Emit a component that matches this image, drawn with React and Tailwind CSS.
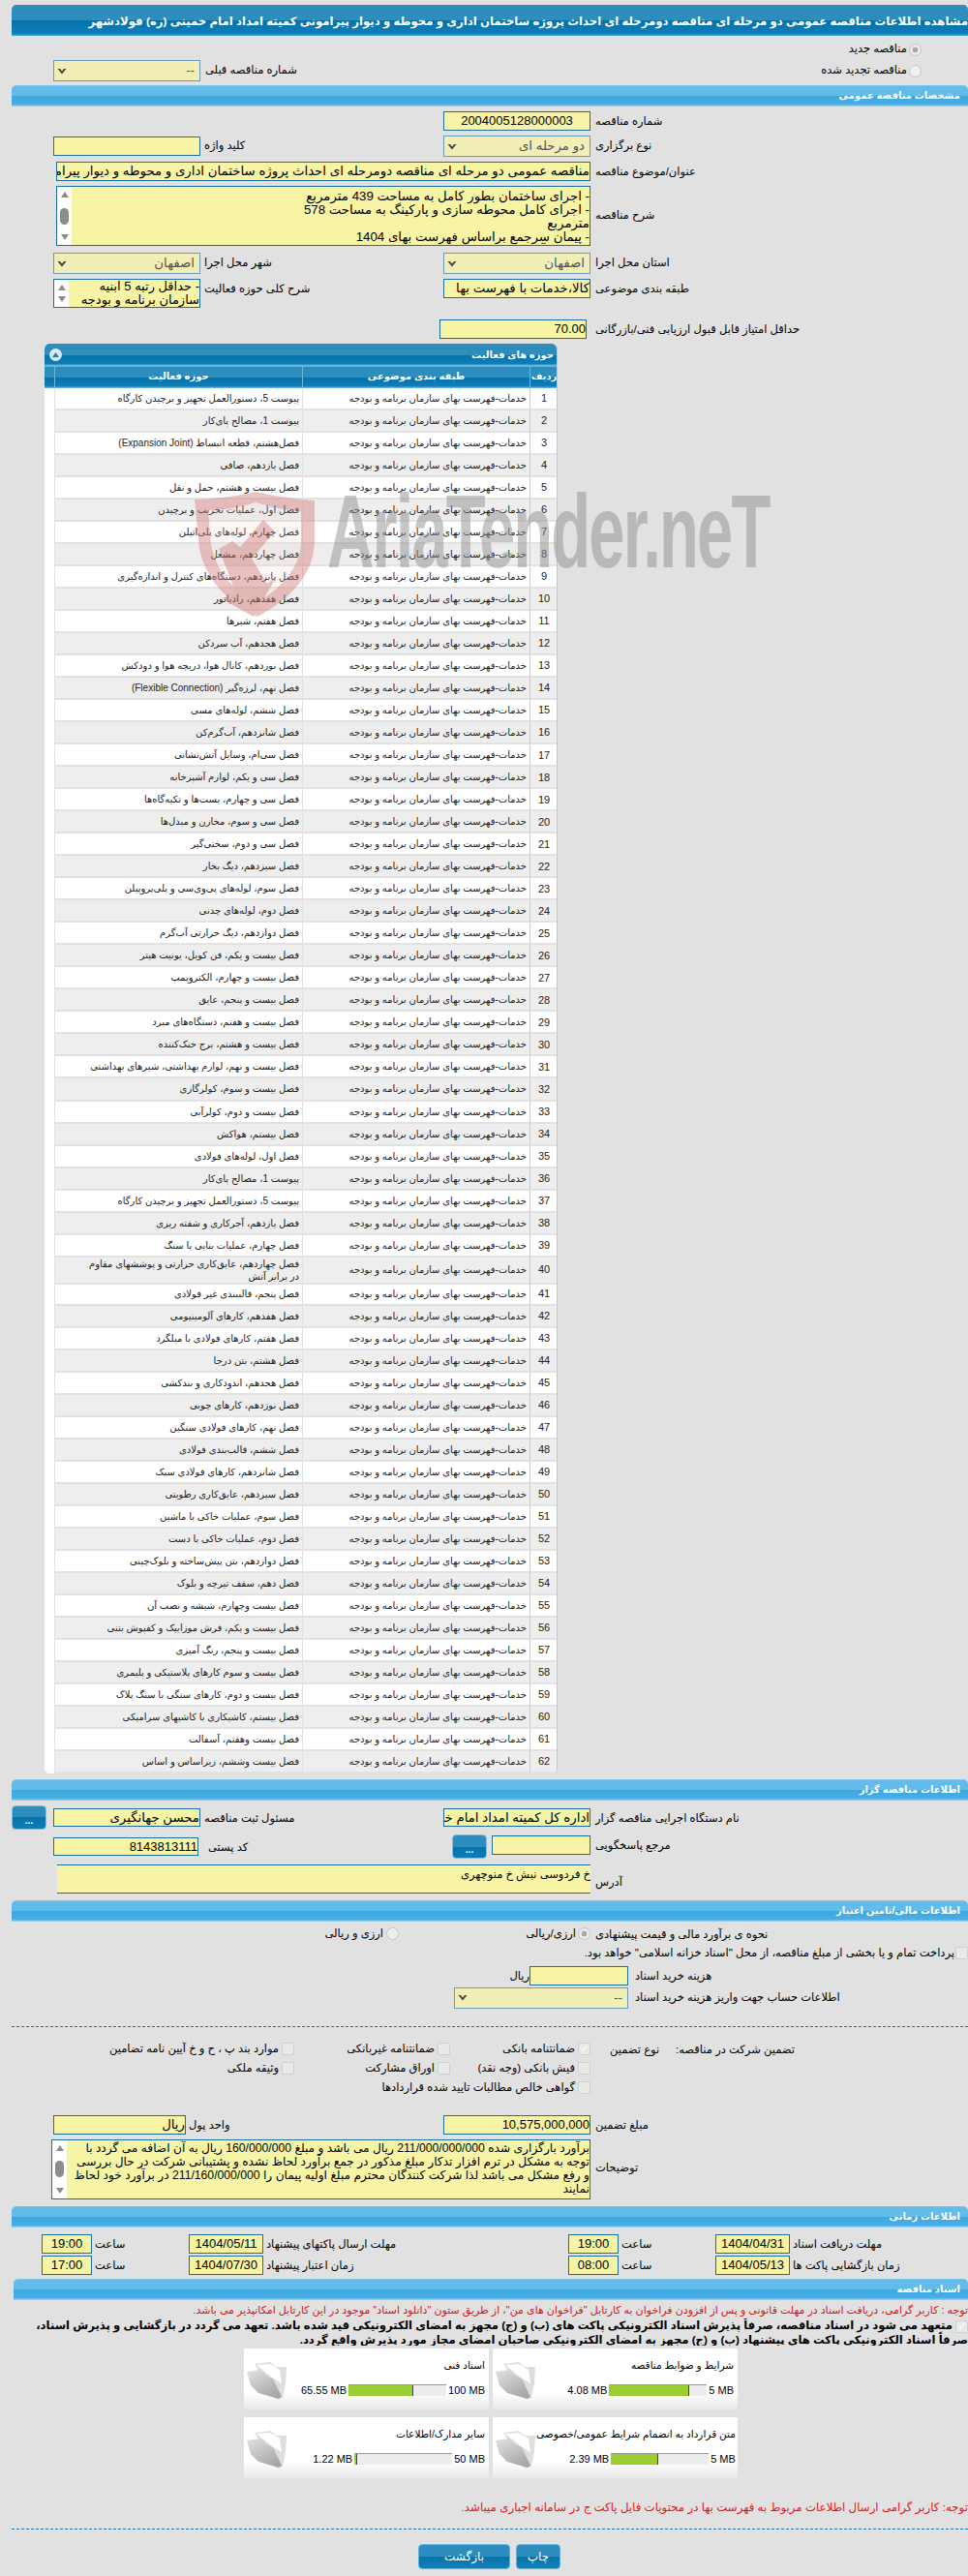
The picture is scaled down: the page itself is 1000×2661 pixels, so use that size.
import React from 'react';

const ACTIVITIES = [
  'پیوست 5، دستورالعمل تجهیز و برچیدن کارگاه',
  'پیوست 1، مصالح پای‌کار',
  'فصل‌هشتم، قطعه انبساط (Expansion Joint)',
  'فصل یازدهم، صافی',
  'فصل بیست و هشتم، حمل و نقل',
  'فصل اول، عملیات تخریب و برچیدن',
  'فصل چهارم، لوله‌های پلی‌اتیلن',
  'فصل چهاردهم، مشعل',
  'فصل پانزدهم، دستگاه‌های کنترل و اندازه‌گیری',
  'فصل هفدهم، رادیاتور',
  'فصل هفتم، شیرها',
  'فصل هجدهم، آب سردکن',
  'فصل نوزدهم، کانال هوا، دریچه هوا و دودکش',
  'فصل نهم، لرزه‌گیر (Flexible Connection)',
  'فصل ششم، لوله‌های مسی',
  'فصل شانزدهم، آب‌گرم‌کن',
  'فصل سی‌ام، وسایل آتش‌نشانی',
  'فصل سی و یکم، لوازم آشپزخانه',
  'فصل سی و چهارم، بست‌ها و تکیه‌گاه‌ها',
  'فصل سی و سوم، مخازن و مبدل‌ها',
  'فصل سی و دوم، سختی‌گیر',
  'فصل سیزدهم، دیگ بخار',
  'فصل سوم، لوله‌های پی‌وی‌سی و پلی‌پروپیلن',
  'فصل دوم، لوله‌های چدنی',
  'فصل دوازدهم، دیگ حرارتی آب‌گرم',
  'فصل بیست و یکم، فن کویل، یونیت هیتر',
  'فصل بیست و چهارم، الکتروپمپ',
  'فصل بیست و پنجم، عایق',
  'فصل بیست و هفتم، دستگاه‌های مبرد',
  'فصل بیست و هشتم، برج خنک‌کننده',
  'فصل بیست و نهم، لوازم بهداشتی، شیرهای بهداشتی',
  'فصل بیست و سوم، کولرگازی',
  'فصل بیست و دوم، کولرآبی',
  'فصل بیستم، هواکش',
  'فصل اول، لوله‌های فولادی',
  'پیوست 1، مصالح پای‌کار',
  'پیوست 5، دستورالعمل تجهیز و برچیدن کارگاه',
  'فصل یازدهم، آجرکاری و شفته ریزی',
  'فصل چهارم، عملیات بنایی با سنگ',
  'فصل چهاردهم، عایق‌کاری حرارتی و پوششهای مقاوم در برابر آتش',
  'فصل پنجم، قالببندی غیر فولادی',
  'فصل هفدهم، کارهای آلومینیومی',
  'فصل هفتم، کارهای فولادی با میلگرد',
  'فصل هشتم، بتن درجا',
  'فصل هجدهم، اندودکاری و بندکشی',
  'فصل نوزدهم، کارهای چوبی',
  'فصل نهم، کارهای فولادی سنگین',
  'فصل ششم، قالب‌بندی فولادی',
  'فصل شانزدهم، کارهای فولادی سبک',
  'فصل سیزدهم، عایق‌کاری رطوبتی',
  'فصل سوم، عملیات خاکی با ماشین',
  'فصل دوم، عملیات خاکی با دست',
  'فصل دوازدهم، بتن پیش‌ساخته و بلوک‌چینی',
  'فصل دهم، سقف تیرچه و بلوک',
  'فصل بیست وچهارم، شیشه و نصب آن',
  'فصل بیست و یکم، فرش موزاییک و کفپوش بتنی',
  'فصل بیست و پنجم، رنگ آمیزی',
  'فصل بیست و سوم کارهای پلاستیکی و پلیمری',
  'فصل بیست و دوم، کارهای سنگی با سنگ پلاک',
  'فصل بیستم، کاشیکاری با کاشیهای سرامیکی',
  'فصل بیست وهفتم، آسفالت',
  'فصل بیست وششم، زیراساس و اساس',
];

const CATEGORY = 'خدمات-فهرست بهای سازمان برنامه و بودجه';

function SectionBar({ title, className = 'ml-[12px]' }) {
  return (
    <div dir="rtl" className={`h-[22px] rounded-t-[5px] bg-[linear-gradient(#7cc8ee_0%,#62bbe9_8%,#62bbe9_50%,#3ba7e1_50%,#4aaee4_90%,#a4d6f0_100%)] pr-2 text-[10px] font-bold leading-[22px] text-white ${className}`}>
      {title}
    </div>
  );
}

function Field({ className = '', wrap, children }) {
  return (
    <div dir="rtl" className={`overflow-hidden border border-[#1d6fa0] bg-[#f7f5a5] text-black ${wrap ? 'whitespace-normal' : 'whitespace-nowrap'} ${className || 'text-[13.3px] leading-[18px]'}`}>
      {children}
    </div>
  );
}

function Select({ value, className = '' }) {
  return (
    <div dir="ltr" className={`flex items-center justify-between border border-[#6d9ab5] bg-[#f1efb6] pl-[3px] pr-[5px] text-[13.3px] text-[#555] ${className}`}>
      <svg width="10" height="7" viewBox="0 0 10 7"><path d="M0.5 1 L3 1 L5 3.5 L7 1 L9.5 1 L5 6.5 Z" fill="#444" /></svg>
      <span dir="rtl">{value}</span>
    </div>
  );
}

function Radio({ checked }) {
  return (
    <span className={`inline-block h-[13px] w-[13px] shrink-0 rounded-full border border-[#c4c4c4] ${checked ? 'bg-[radial-gradient(#a8a8a8_35%,#ececec_40%)]' : 'bg-[#efefef]'}`} />
  );
}

function Check({ checked }) {
  return (
    <span className="inline-flex h-[13px] w-[13px] shrink-0 items-center justify-center rounded-[2px] border border-[#cfcfcf] bg-[#e9e9e9] text-[11px] leading-none text-white">
      {checked ? '✓' : ''}
    </span>
  );
}

function Scrollbar({ thumb = true }) {
  return (
    <div className="absolute left-0 top-0 flex h-full w-[15px] flex-col items-center justify-between bg-white py-[5px]">
      <span className="h-0 w-0 border-x-[4px] border-b-[6px] border-x-transparent border-b-[#8c8c8c]" />
      {thumb && <span className="h-[17px] w-[9px] rounded-full bg-[#8c8c8c]" />}
      <span className="h-0 w-0 border-x-[4px] border-t-[6px] border-x-transparent border-t-[#8c8c8c]" />
    </div>
  );
}

function SmallBtn({ className = '' }) {
  return (
    <div className={`flex h-[25px] w-[36px] shrink-0 items-end justify-center rounded-[4px] border border-[#7cc0e6] bg-[linear-gradient(#2d8dbd_50%,#0472ab_50%,#0f7eb6_100%)] pb-[2px] text-[10px] font-bold leading-[12px] text-white ${className}`}>
      ...
    </div>
  );
}

function BlueBtn({ children, className = '' }) {
  return (
    <div className={`flex h-[26px] items-center justify-center rounded-[4px] border border-[#5fb4e2] bg-[linear-gradient(#2d8dbd_50%,#0472ab_50%,#1580b8_100%)] text-[12px] text-white ${className}`}>
      {children}
    </div>
  );
}

// the big form rows: [spacer][left input][left label][right input][right label]
function FormRow({ className = '', children }) {
  return (
    <div dir="ltr" className={`grid grid-cols-[55px_152px_251px_152px_1fr] ${className}`}>
      {children}
    </div>
  );
}

function Label({ children, className = 'pl-[5px]' }) {
  return <div className={`whitespace-nowrap text-[11.5px] leading-[20px] ${className}`} dir="ltr"><span dir="rtl">{children}</span></div>;
}

function FolderIcon() {
  return (
    <svg width="42" height="40" viewBox="0 0 42 40" className="mt-[14px] shrink-0">
      <defs>
        <linearGradient id="folderFront" x1="0" y1="0" x2="0.7" y2="1">
          <stop offset="0" stopColor="#e2e2e2" />
          <stop offset="1" stopColor="#a6a6a6" />
        </linearGradient>
      </defs>
      <path d="M8 2 L24 0 L30 5 L41 5 L40 22 L37 37 L30 38 Z" fill="#dedede" />
      <path d="M10 3 L24 2 L34 8 L36 22 L26 16 Z" fill="#ffffff" />
      <path d="M0 10 L14 8 L20 14 L27 17 L36 36 L33 38 L12 32 L4 24 Z" fill="url(#folderFront)" />
    </svg>
  );
}

function DocCard({ title, used, max, pct }) {
  return (
    <div dir="ltr" className="flex h-[63px] w-[253px] bg-[linear-gradient(#ffffff_72%,#e8e8e8_100%)] pl-[3px] pr-[4px]">
      <FolderIcon />
      <div className="flex flex-1 flex-col pt-[8px]">
        <div dir="rtl" className="h-[29px] whitespace-nowrap text-[10.5px] leading-[18px]">{title}</div>
        <div className="flex items-center justify-end gap-[2px] text-[11px] leading-[12px]">
          <span className="shrink-0">{used}</span>
          <div className="flex h-[12px] w-[101px] shrink-0 border-t border-[#999] bg-[#ededed]">
            <div className="border-r border-[#444] bg-[#9acd32]" style={{ width: `${pct}%` }} />
          </div>
          <span className="shrink-0">{max}</span>
        </div>
      </div>
    </div>
  );
}

function Watermark() {
  return (
    <div dir="ltr" className="pointer-events-none absolute left-[200px] top-[507px] h-[131px] w-[620px]">
      <svg width="126" height="131" viewBox="0 0 126 131" className="absolute left-0 top-0 opacity-45">
        <path d="M1 9 Q35 8 64 1 Q95 8 125 10 L125 55 Q122 100 66 130 Q15 105 6 60 Z M15 20 Q40 20 64 12 Q88 20 111 21 L111 55 Q108 90 66 115 Q25 95 18 55 Z" fill="#d47f7c" fillRule="evenodd" />
        <path d="M15 20 Q40 20 64 12 Q88 20 111 21 L111 55 Q108 90 66 115 Q25 95 18 55 Z" fill="#efcfce" opacity="0.4" />
        <path d="M72 30 L84 42 L60 70 L76 96 L86 88 L62 130 L30 112 L44 106 L26 60 L40 52 L48 58 Z" fill="#cf7672" />
      </svg>
      <span className="absolute left-[138px] top-[-12px] origin-left scale-x-[0.62] whitespace-nowrap font-['Liberation_Sans'] text-[108px] font-bold leading-[108px] tracking-[-3px] text-[#8f8f8f]/50">AriaTender.neT</span>
    </div>
  );
}

function ActivityTable() {
  return (
    <div dir="ltr" className="ml-[46px] mt-[5px] w-[530px] overflow-hidden rounded-[5px] border-r border-[#a9cfe8] bg-white">
      <div className="flex h-[23px] items-center justify-between rounded-t-[5px] bg-[linear-gradient(#2d8dbd_50%,#0472ab_50%,#0f7eb6_90%,#7cc0e6_100%)] pl-[5px] pr-[3px] text-[10px] font-bold text-white">
        <span className="flex h-[13px] w-[13px] items-center justify-center rounded-full bg-[#dbe9f3]">
          <svg width="7" height="5" viewBox="0 0 7 5"><path d="M3.5 0 L7 5 L0 5 Z" fill="#1c7fb4" /></svg>
        </span>
        <span dir="rtl">حوزه های فعالیت</span>
      </div>
      <div className="grid h-[23px] grid-cols-[10px_256px_235px_29px] border-t border-[#5fb4e2] bg-[linear-gradient(#2d8dbd_50%,#0472ab_50%,#0f7eb6_90%,#7cc0e6_100%)] text-center text-[10px] font-bold leading-[20px] text-white">
        <div />
        <div dir="rtl" className="border-l border-[#6db5da]">حوزه فعالیت</div>
        <div dir="rtl" className="border-l border-[#6db5da]">طبقه بندی موضوعی</div>
        <div dir="rtl" className="border-l border-[#6db5da]">ردیف</div>
      </div>
      {ACTIVITIES.map((name, i) => (
        <div key={i} className={`grid grid-cols-[10px_256px_235px_29px] ${i === 39 ? 'h-[27px]' : 'h-[23.03px]'} text-[10px] text-[#222]`}>
          <div />
          <div dir="rtl" className={`flex items-center border-b-2 border-l border-[#e2e2e2] pr-[3px] leading-[13px] ${i === 39 ? 'pl-[28px]' : ''} ${i % 2 ? 'bg-[#eeeeee]' : ''}`}>{name}</div>
          <div dir="rtl" className={`flex items-center whitespace-nowrap border-b-2 border-l border-[#e2e2e2] pr-[3px] ${i % 2 ? 'bg-[#eeeeee]' : ''}`}>{CATEGORY}</div>
          <div className={`flex items-center justify-center border-b-2 border-l border-[#c9c9c9] border-b-[#e2e2e2] text-[11px] ${i % 2 ? 'bg-[#eeeeee]' : ''}`}>{i + 1}</div>
        </div>
      ))}
    </div>
  );
}

function CheckItem({ checked, children }) {
  return (
    <div dir="rtl" className="flex items-center gap-[3px] whitespace-nowrap text-[11.5px]">
      <Check checked={checked} /><span>{children}</span>
    </div>
  );
}

function DateRow({ label, date, label2, date2, time, time2 }) {
  const box = 'text-center text-[13px] leading-[18px]';
  return (
    <div dir="ltr" className="grid h-[20px] grid-cols-[43px_52px_100px_77px_315px_52px_100px_77px_1fr]">
      <div />
      <Field className={box}>{time2}</Field>
      <Label className="pl-[3px]">ساعت</Label>
      <Field className={box}>{date2}</Field>
      <Label className="pl-[3px]">{label2}</Label>
      <Field className={box}>{time}</Field>
      <Label className="pl-[3px]">ساعت</Label>
      <Field className={box}>{date}</Field>
      <Label className="pl-[3px]">{label}</Label>
    </div>
  );
}

export default function App() {
  return (
    <div className="relative h-[2661px] w-[1000px] overflow-hidden bg-[#e1e1e1] pt-[5px] font-['Liberation_Sans','DejaVu_Sans',sans-serif] text-[12px] text-black">
      {/* page title */}
      <div dir="rtl" className="ml-[12px] h-[32px] overflow-hidden whitespace-nowrap rounded-t-[5px] bg-[linear-gradient(#2d8dbd_50%,#0472ab_50%,#0f7eb6_92%,#4ca6dc_100%)] text-[11.7px] font-bold leading-[34px] text-white">
        مشاهده اطلاعات مناقصه عمومی دو مرحله ای مناقصه دومرحله ای احداث پروژه ساختمان اداری و محوطه و دیوار پیرامونی کمیته امداد امام خمینی (ره) فولادشهر
      </div>

      {/* new / renewed tender */}
      <div dir="rtl" className="h-[51px] pt-[3px]">
        <div className="flex h-[22px] items-center gap-[2px] pr-[48px] text-[11.5px]">
          <Radio checked /><span>مناقصه جدید</span>
        </div>
        <div dir="ltr" className="grid h-[22px] grid-cols-[55px_152px_1fr_auto] pr-[48px]">
          <div />
          <Select value="--" className="h-[22px]" />
          <Label>شماره مناقصه قبلی</Label>
          <div dir="rtl" className="flex items-center gap-[2px] text-[11.5px]">
            <Radio /><span>مناقصه تجدید شده</span>
          </div>
        </div>
      </div>

      <SectionBar title="مشخصات مناقصه عمومی" />

      <FormRow className="mt-[5px] h-[20px]">
        <div /><div /><div />
        <Field className="text-center text-[13px] leading-[18px]">2004005128000003</Field>
        <Label>شماره مناقصه</Label>
      </FormRow>
      <FormRow className="mt-[5px] h-[22px]">
        <div />
        <Field className="mt-[1px] h-[20px]" />
        <Label className="pl-[4px]">کلید واژه</Label>
        <Select value="دو مرحله ای" />
        <Label>نوع برگزاری</Label>
      </FormRow>
      <FormRow className="mt-[5px] h-[20px]">
        <div />
        <Field className="col-span-3 ml-[3px] text-[13.3px] leading-[18px]">مناقصه عمومی دو مرحله ای مناقصه دومرحله ای احداث پروژه ساختمان اداری و محوطه و دیوار پیرامونی کمیته امداد امام خمینی (ره) فولادشهر</Field>
        <Label>عنوان/موضوع مناقصه</Label>
      </FormRow>
      <FormRow className="mt-[5px] h-[62px]">
        <div />
        <Field wrap className="relative col-span-3 ml-[3px] pl-[16px] text-[13.3px] leading-[14px]">
          <Scrollbar />
          <div className="pt-[3px]">- اجرای ساختمان بطور کامل به مساحت 439 مترمربع</div>
          <div>- اجرای کامل محوطه سازی و پارکینگ به مساحت 578</div>
          <div>مترمربع</div>
          <div>- پیمان سرجمع براساس فهرست بهای 1404</div>
          <div>- مبلغ برآورد 211/160/000/000 ریال</div>
        </Field>
        <Label className="pl-[5px] pt-[20px]">شرح مناقصه</Label>
      </FormRow>
      <FormRow className="mt-[7px] h-[22px]">
        <div />
        <Select value="اصفهان" />
        <Label className="pl-[4px]">شهر محل اجرا</Label>
        <Select value="اصفهان" />
        <Label>استان محل اجرا</Label>
      </FormRow>
      <FormRow className="mt-[5px] h-[30px]">
        <div />
        <Field wrap className="relative pl-[15px] text-[13px] leading-[14px]">
          <Scrollbar thumb={false} />
          - حداقل رتبه 5 ابنیه سازمان برنامه و بودجه
        </Field>
        <Label className="pl-[4px]">شرح کلی حوزه فعالیت</Label>
        <Field className="h-[20px] text-[13.3px] leading-[18px]">کالا،خدمات با فهرست بها</Field>
        <Label>طبقه بندی موضوعی</Label>
      </FormRow>
      <FormRow className="mt-[12px] h-[20px]">
        <div /><div /><div />
        <Field className="-ml-[4px] mr-[4px] w-[152px] text-[13px] leading-[18px]">70.00</Field>
        <Label>حداقل امتیاز قابل قبول ارزیابی فنی/بازرگانی</Label>
      </FormRow>

      <ActivityTable />

      <SectionBar title="اطلاعات مناقصه گزار" className="ml-[12px] mt-[6px]" />

      <FormRow className="mt-[5px] h-[25px]">
        <div><SmallBtn className="ml-[12px]" /></div>
        <Field className="my-[3px] text-[13.3px] leading-[18px]">محسن جهانگیری</Field>
        <Label className="pl-[4px] pt-[3px]">مسئول ثبت مناقصه</Label>
        <Field className="my-[3px] text-[13.3px] leading-[18px]">اداره کل کمیته امداد امام خمینی (ره) استان اصفهان</Field>
        <Label className="pl-[5px] pt-[3px]">نام دستگاه اجرایی مناقصه گزار</Label>
      </FormRow>
      <FormRow className="mt-[5px] h-[25px]">
        <div />
        <Field className="my-[3px] w-[150px] text-[13px] leading-[18px]">8143813111</Field>
        <Label className="pl-[8px] pt-[3px]">کد پستی</Label>
        <div className="flex items-start justify-between pl-[9px]">
          <SmallBtn />
          <Field className="mt-[1px] h-[20px] w-[102px]" />
        </div>
        <Label className="pl-[5px] pt-[1px]">مرجع پاسخگویی</Label>
      </FormRow>
      <FormRow className="mt-[6px] h-[30px]">
        <div />
        <Field wrap className="col-span-3 ml-[4px] border-x-0 text-[11.5px] leading-[18px]">خ فردوسی نبش خ منوچهری</Field>
        <Label className="pl-[5px] pt-[8px]">آدرس</Label>
      </FormRow>

      <SectionBar title="اطلاعات مالی/تامین اعتبار" className="ml-[12px] mt-[7px]" />

      <div dir="ltr" className="mt-[3px] grid h-[20px] grid-cols-[336px_76px_130px_68px_1fr] items-center text-[11.5px]">
        <div />
        <div dir="rtl" className="flex items-center gap-[3px] whitespace-nowrap"><Radio /><span>ارزی و ریالی</span></div>
        <div />
        <div dir="rtl" className="flex items-center gap-[2px] whitespace-nowrap"><Radio checked /><span>ارزی/ریالی</span></div>
        <Label className="pl-[5px]">نحوه ی برآورد مالی و قیمت پیشنهادی</Label>
      </div>
      <div dir="rtl" className="flex h-[20px] items-center gap-[1px] whitespace-nowrap text-[11.5px]">
        <Check /><span>پرداخت تمام و یا بخشی از مبلغ مناقصه، از محل "اسناد خزانه اسلامی" خواهد بود.</span>
      </div>
      <div dir="ltr" className="mt-[3px] flex h-[20px] pl-[525px]">
        <span dir="rtl" className="w-[22px] text-[11.5px] leading-[20px]">ریال</span>
        <Field className="w-[102px]" />
        <Label className="pl-[7px]">هزینه خرید اسناد</Label>
      </div>
      <div dir="ltr" className="mt-[2px] flex h-[22px] pl-[469px]">
        <Select value="--" className="w-[180px]" />
        <Label className="pl-[7px]">اطلاعات حساب جهت واریز هزینه خرید اسناد</Label>
      </div>

      <div className="ml-[12px] mt-[18px] border-t border-dashed border-[#1d6fa0]" />

      {/* guarantee */}
      <div dir="ltr" className="mt-[13px] grid grid-cols-[100px_204px_161px_145px_20px_68px_1fr] grid-rows-[20px_20px_20px] items-center text-[11.5px]">
        <div />
        <CheckItem>موارد بند پ ، ح و خ آیین نامه تضامین</CheckItem>
        <CheckItem>ضمانتنامه غیربانکی</CheckItem>
        <CheckItem checked>ضمانتنامه بانکی</CheckItem>
        <div />
        <Label className="pl-0">نوع تضمین</Label>
        <Label className="pl-0">تضمین شرکت در مناقصه:</Label>
        <div />
        <CheckItem>وثیقه ملکی</CheckItem>
        <CheckItem>اوراق مشارکت</CheckItem>
        <CheckItem>فیش بانکی (وجه نقد)</CheckItem>
        <div /><div /><div />
        <div /><div /><div />
        <CheckItem>گواهی خالص مطالبات تایید شده قراردادها</CheckItem>
      </div>

      <FormRow className="mt-[18px] h-[20px]">
        <div />
        <Field className="mr-[15px] text-[13.3px] leading-[18px]">ریال</Field>
        <Label className="-ml-[15px] pl-[3px]">واحد پول</Label>
        <Field className="text-[13px] leading-[18px]">10,575,000,000</Field>
        <Label>مبلغ تضمین</Label>
      </FormRow>
      <FormRow className="mt-[5px] h-[62px]">
        <div />
        <Field wrap className="relative col-span-3 -ml-[2px] pl-[16px] pt-[1px] text-[12.2px] leading-[14px]">
          <Scrollbar />
          برآورد بارگزاری شده 211/000/000/000 ریال می باشد و مبلغ 160/000/000 ریال به آن اضافه می گردد با توجه به مشکل در ترم افزار تدکار مبلغ مذکور در جمع برآورد لحاظ نشده و پشتیبانی شرکت در حال بررسی و رفع مشکل می باشد لذا شرکت کنندگان محترم مبلغ اولیه پیمان را 211/160/000/000 در برآورد خود لحاظ نمایند
        </Field>
        <Label className="pl-[5px] pt-[19px]">توضیحات</Label>
      </FormRow>

      <SectionBar title="اطلاعات زمانی" className="ml-[12px] mt-[7px]" />

      <div className="mt-[7px] flex flex-col gap-[2px]">
        <DateRow label="مهلت دریافت اسناد" date="1404/04/31" time="19:00" label2="مهلت ارسال پاکتهای پیشنهاد" date2="1404/05/11" time2="19:00" />
        <DateRow label="زمان بازگشایی پاکت ها" date="1404/05/13" time="08:00" label2="زمان اعتبار پیشنهاد" date2="1404/07/30" time2="17:00" />
      </div>

      <SectionBar title="اسناد مناقصه" className="ml-[14px] mt-[4px]" />

      <div dir="rtl" className="mt-[3px] h-[14px] overflow-hidden whitespace-nowrap text-[11px] leading-[14px] text-[#e01010]">
        توجه : کاربر گرامی، دریافت اسناد در مهلت قانونی و پس از افزودن فراخوان به کارتابل "فراخوان های من"، از طریق ستون "دانلود اسناد" موجود در این کارتابل امکانپذیر می باشد.
      </div>
      <div dir="rtl" className="mt-[2px] h-[28px] overflow-hidden whitespace-nowrap text-[11.6px] font-bold leading-[14px]">
        <span className="ml-[3px] align-middle"><Check checked /></span>
        متعهد می شود در اسناد مناقصه، صرفاً پذیرش اسناد الکترونیکی پاکت های (ب) و (ج) مجهز به امضای الکترونیکی قید شده باشد. تعهد می گردد در بازگشایی و پذیرش اسناد،
        <br />
        صرفاً اسناد الکترونیکی پاکت های پیشنهاد (ب) و (ج) مجهز به امضای الکترونیکی صاحبان امضای مجاز مورد پذیرش واقع گردد.
      </div>

      <div dir="ltr" className="mt-[3px] grid grid-cols-[253px_253px] justify-start gap-x-[4px] gap-y-[8px] pl-[252px]">
        <DocCard title="اسناد فنی" used="65.55 MB" max="100 MB" pct={66} />
        <DocCard title="شرایط و ضوابط مناقصه" used="4.08 MB" max="5 MB" pct={82} />
        <DocCard title="سایر مدارک/اطلاعات" used="1.22 MB" max="50 MB" pct={3} />
        <DocCard title="متن قرارداد به انضمام شرایط عمومی/خصوصی" used="2.39 MB" max="5 MB" pct={48} />
      </div>

      <div dir="rtl" className="mt-[22px] h-[16px] overflow-hidden whitespace-nowrap text-[11.8px] leading-[16px] text-[#ee1111]">
        توجه: کاربر گرامی ارسال اطلاعات مربوط به فهرست بها در محتویات فایل پاکت ج در سامانه اجباری میباشد.
      </div>

      <div className="ml-[12px] mt-[14px] border-t border-dashed border-[#1d6fa0]" />

      <div dir="ltr" className="mt-[15px] flex justify-start gap-[6px] pl-[432px]">
        <BlueBtn className="w-[95px]"><span dir="rtl">بازگشت</span></BlueBtn>
        <BlueBtn className="w-[46px]"><span dir="rtl">چاپ</span></BlueBtn>
      </div>

      <Watermark />
    </div>
  );
}
